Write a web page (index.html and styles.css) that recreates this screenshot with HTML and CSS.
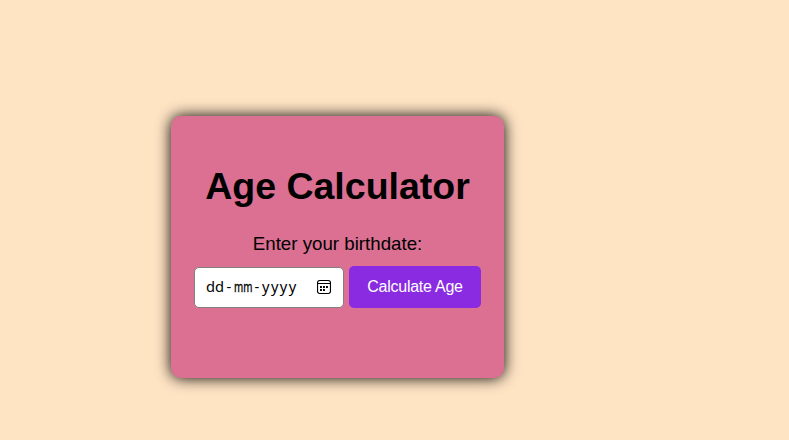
FILE: index.html
```html
<!DOCTYPE html>
<html lang="en">
<head>
<meta charset="utf-8">
<title>Age Calculator</title>
<link rel="stylesheet" href="styles.css">
</head>
<body>
<main class="card">
  <h1 class="title">Age Calculator</h1>
  <p class="label">Enter your birthdate:</p>
  <div class="controls">
    <div class="date-field">
      <div class="placeholder"><span class="day">dd</span><span class="dash">-</span><span class="month">mm</span><span class="dash">-</span><span class="year">yyyy</span></div>
      <svg class="calendar" width="14" height="14" viewBox="0 0 14 14" aria-hidden="true">
        <rect x=".55" y=".55" width="12.9" height="12.9" rx="2.2" fill="none" stroke="#000" stroke-width="1.1"/>
        <path d="M.5 3.5h13" stroke="#000" stroke-width="1"/>
        <path d="M3 6h1.9v1.9H3zM6 6h1.9v1.9H6zM9 6h1.9v1.9H9zM3 9h1.9v1.9H3zM6 9h1.9v1.9H6z" fill="#000"/>
      </svg>
    </div>
    <button class="calculate" type="button">Calculate Age</button>
  </div>
</main>
</body>
</html>
```
FILE: styles.css
```css
* { box-sizing: border-box; }
body {
  margin: 0;
  height: 440px;
  overflow: hidden;
  background: #ffe4c4;
  font-family: "Liberation Sans", Arial, sans-serif;
  color: #000;
}
.card {
  width: 333px;
  height: 262px;
  margin: 116px 0 0 171px;
  padding-top: 49px;
  display: flex;
  flex-direction: column;
  align-items: center;
  border-radius: 10px;
  background: #db7093;
  box-shadow: 0 0 15px #000;
}
.title {
  margin: 0;
  font-size: 37.5px;
  line-height: 43px;
  white-space: nowrap;
}
.label {
  margin: 25px 0 0;
  font-size: 18.72px;
  line-height: 22px;
}
.controls {
  display: flex;
  align-items: flex-end;
  gap: 5px;
  margin-top: 11px;
}
.date-field {
  width: 150px;
  height: 41px;
  padding: 0 12px 1px 11px;
  display: flex;
  align-items: center;
  justify-content: space-between;
  border: 1px solid #808080;
  border-radius: 5px;
  background: #fff;
}
.placeholder {
  display: flex;
  padding-bottom: 2px;
  font: 14.7px/20px "Noto Sans", sans-serif;
}
.day { width: 18px; }
.dash { width: 9.5px; text-align: center; }
.month {
  width: 18.5px;
  transform: scaleX(0.67);
  transform-origin: left;
  -webkit-text-stroke: 0.35px #000;
}
.year {
  width: 37px;
  padding-left: 0.5px;
  letter-spacing: 1.4px;
}
.calendar { display: block; }
.calculate {
  width: 132px;
  height: 42px;
  padding: 0;
  border: 0;
  border-radius: 5px;
  background: #8a2be2;
  color: #fff;
  font: 16px/20px "Liberation Sans", Arial, sans-serif;
  letter-spacing: -0.25px;
}
```
